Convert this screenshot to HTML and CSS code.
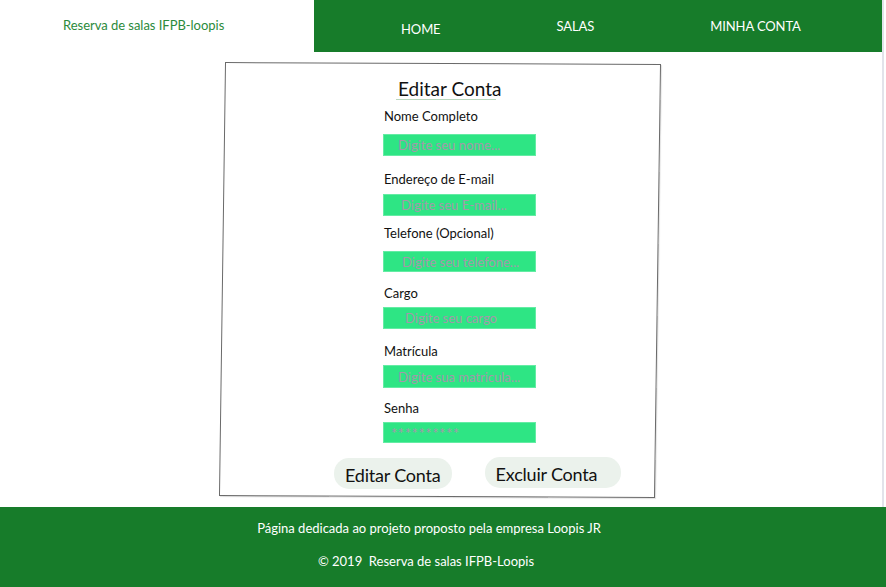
FILE: index.html
```html
<!DOCTYPE html>
<html lang="pt-BR">
<head>
<meta charset="utf-8">
<title>Editar Conta - Reserva de salas IFPB-loopis</title>
<link rel="stylesheet" href="styles.css">
</head>
<body>
<div class="page">
  <header class="topbar">
    <div class="brand">Reserva de salas IFPB-loopis</div>
    <nav class="nav">
      <a class="nav-link nav-link--home" href="#">HOME</a>
      <a class="nav-link" href="#">SALAS</a>
      <a class="nav-link" href="#">MINHA CONTA</a>
    </nav>
  </header>
  <main class="main">
    <section class="card">
      <h2 class="card-title">Editar Conta</h2>
      <div class="card-rule"></div>
      <form class="form">
        <label class="field-label f1">Nome Completo</label>
        <input class="field-input i1 p-nome" type="text" placeholder="Digite seu nome...">
        <label class="field-label f2">Endereço de E-mail</label>
        <input class="field-input i2 p-email" type="text" placeholder="Digite seu E-mail...">
        <label class="field-label f3">Telefone (Opcional)</label>
        <input class="field-input i3 p-tel" type="text" placeholder="Digite seu telefone...">
        <label class="field-label f4">Cargo</label>
        <input class="field-input i4 p-cargo" type="text" placeholder="Digite seu cargo">
        <label class="field-label f5">Matrícula</label>
        <input class="field-input i5 p-mat" type="text" placeholder="Digite sua matricula...">
        <label class="field-label f6">Senha</label>
        <input class="field-input i6 p-senha" type="text" placeholder="**********">
        <div class="actions">
          <button class="btn" type="button">Editar Conta</button>
          <button class="btn btn--delete" type="button">Excluir Conta</button>
        </div>
      </form>
    </section>
  </main>
  <footer class="footer">
    <p class="footer-line">Página dedicada ao projeto proposto pela empresa Loopis JR</p>
    <p class="footer-line footer-line--copy">© 2019&nbsp; Reserva de salas IFPB-Loopis</p>
  </footer>
</div>
</body>
</html>
```
FILE: styles.css
```css
html, body {
  margin: 0;
  padding: 0;
  background: #ffffff;
}
body {
  font-family: Lato, "Open Sans", "Liberation Sans", sans-serif;
  color: #111;
}
.page {
  width: 886px;
  height: 587px;
  display: flex;
  flex-direction: column;
}
.topbar {
  display: flex;
  height: 52px;
  margin-right: 2px;
  border-right: 2px solid #e2e3ea;
}
.brand {
  width: 314px;
  box-sizing: border-box;
  padding: 17px 0 0 63px;
  font-size: 13px;
  line-height: 16px;
  color: #2b8a3b;
  letter-spacing: -0.03px;
}
.nav {
  flex: 1;
  background: #177c2a;
  display: flex;
  align-items: flex-start;
  gap: 116px;
  padding: 18px 0 0 87px;
  box-sizing: border-box;
}
.nav-link {
  color: #ffffff;
  text-decoration: none;
  font-size: 13px;
  line-height: 16px;
  letter-spacing: -0.1px;
}
.nav-link--home {
  margin-top: 3px;
}
.main {
  height: 455px;
  box-sizing: border-box;
  padding-top: 11px;
  border-right: 2px solid #e2e3ea;
  margin-right: 2px;
}
.card {
  position: relative;
  width: 436px;
  height: 434px;
  margin-left: 222px;
  box-sizing: border-box;
  padding-top: 15px;
}
.card::before {
  content: "";
  position: absolute;
  inset: 0;
  border: 1px solid #6a6a6a;
  box-shadow: 1px 1px 1px rgba(0,0,0,0.12);
  transform: matrix(1, 0.0046, -0.0139, 1, 0, 0);
  pointer-events: none;
}
.card-title {
  margin: 0 0 0 176px;
  font-size: 19px;
  line-height: 21px;
  font-weight: 400;
  color: #111;
}
.card-rule {
  margin-left: 174px;
  width: 100px;
  height: 1px;
  background: #b9d7bd;
}
.form {
  display: flex;
  flex-direction: column;
  align-items: flex-start;
  padding-left: 161px;
}
.field-label {
  display: block;
  margin-left: 1px;
  font-size: 13px;
  line-height: 16px;
  color: #111;
}
.field-input {
  width: 153px;
  height: 22px;
  box-sizing: border-box;
  border: 1px solid #64eca4;
  background: #2ee584;
  font-family: Lato, "Open Sans", "Liberation Sans", sans-serif;
  font-size: 13px;
  padding: 0 0 0 14px;
  outline: none;
}
.field-input::placeholder {
  color: #a398aa;
  opacity: 1;
}
.f1 { margin-top: 8px; }
.i1 { margin-top: 10px; }
.f2 { margin-top: 15px; }
.i2 { margin-top: 7px; }
.f3 { margin-top: 9px; }
.i3 { margin-top: 10px; height: 21px; }
.f4 { margin-top: 13px; }
.i4 { margin-top: 6px; }
.f5 { margin-top: 14px; }
.i5 { margin-top: 6px; height: 23px; }
.f6 { margin-top: 12px; }
.i6 { margin-top: 6px; height: 21px; }
.p-nome { padding-left: 14px; }
.p-email { padding-left: 17px; }
.p-tel { padding-left: 18px; }
.p-cargo { padding-left: 21px; }
.p-mat { padding-left: 14px; }
.p-senha {
  padding-left: 7px;
  font-size: 15px;
  letter-spacing: 0.5px;
}
.actions {
  display: flex;
  align-items: flex-start;
  gap: 33px;
  margin: 15px 0 0 -49px;
}
.btn {
  height: 31px;
  border: none;
  border-radius: 15px;
  background: #ebf2ec;
  font-family: Lato, "Open Sans", "Liberation Sans", sans-serif;
  font-size: 18px;
  line-height: 22px;
  letter-spacing: -0.2px;
  color: #111;
  padding: 3px 11px 0 11px;
  cursor: pointer;
}
.btn--delete {
  margin-top: -1px;
  padding-right: 24px;
}
.footer {
  flex: 1;
  background: #177c2a;
  color: #ffffff;
  text-align: center;
  box-sizing: border-box;
  padding: 13px 0 0 0;
}
.footer-line {
  margin: 0;
  font-size: 13px;
  line-height: 16px;
  padding-right: 28px;
}
.footer-line--copy {
  margin-top: 17px;
  padding-right: 34px;
}
```
